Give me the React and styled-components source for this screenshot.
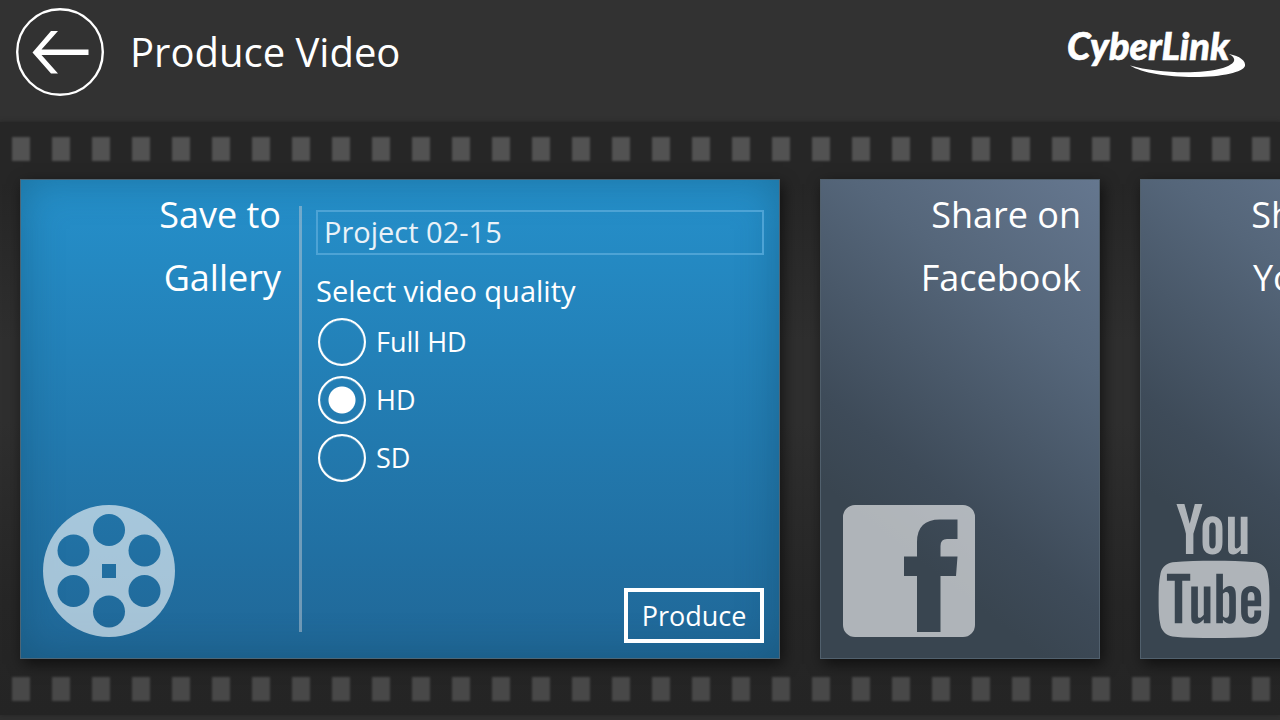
import React, { useState } from "react";
import styled, { createGlobalStyle } from "styled-components";
import { TfiYoutube } from "react-icons/tfi";

const GlobalStyle = createGlobalStyle`
  * {
    box-sizing: border-box;
  }

  body {
    margin: 0;
    background: #303030;
    color: #fff;
    font-family: "Open Sans", "Noto Sans", sans-serif;
  }
`;

const PageEl = styled.div`
  display: flex;
  flex-direction: column;
  min-height: 100vh;
  overflow: hidden;
`;

const HeaderEl = styled.header`
  display: flex;
  align-items: center;
  gap: 26px;
  padding: 8px 34px 26px 16px;
  background: #323232;
`;

const BackButtonEl = styled.button`
  width: 88px;
  height: 88px;
  padding: 0;
  border: 0;
  background: none;
  color: inherit;
  cursor: pointer;

  svg {
    display: block;
  }
`;

const TitleEl = styled.h1`
  flex: 1;
  margin: 0;
  font-size: 40px;
  font-weight: 400;
  line-height: 56px;
`;

const LogoEl = styled.svg`
  flex: none;
  overflow: visible;
`;

const FilmEl = styled.main`
  display: flex;
  flex-direction: column;
  background: linear-gradient(
    #262626,
    #262626 60px,
    #2f2f2f 220px,
    #2f2f2f 300px,
    #262626 480px,
    #242424
  );
  box-shadow: 0 0 4px #242424;
`;

const HolesEl = styled.div`
  height: 24px;
  margin: ${({ $margin }) => $margin};
  background: repeating-linear-gradient(
    90deg,
    transparent 0 12px,
    ${({ $color }) => $color} 12px 30px,
    transparent 30px 40px
  );
  filter: blur(1px);
`;

const CardsEl = styled.div`
  display: flex;
  gap: 40px;
  padding: 0 20px;
`;

const CardEl = styled.section`
  display: flex;
  flex: none;
  width: ${({ $active }) => ($active ? "760px" : "280px")};
  height: 480px;
  border: 1px solid ${({ $active }) => ($active ? "#4d6575" : "#51606d")};
  background: ${({ $active }) =>
    $active
      ? "linear-gradient(#2590cb, #2279ae 55%, #206797)"
      : "linear-gradient(218deg, #65778f, #55667a 28%, #3e4b59 62%, #394550 75%)"};
  box-shadow:
    ${({ $active }) => ($active ? "inset 0 0 40px rgba(15, 70, 95, 0.4)," : "")}
    3px 5px 14px rgba(0, 0, 0, 0.6);
`;

const TileEl = styled.div`
  display: flex;
  flex: 0 0 278px;
  flex-direction: column;
  justify-content: space-between;
  padding: 3px 18px 20px 21px;
`;

const TileTitleEl = styled.h2`
  margin: 0;
  font-size: 36px;
  font-weight: 400;
  line-height: 63px;
  text-align: right;

  span {
    display: block;
  }
`;

const TileIconEl = styled.div`
  width: 134px;
  height: 134px;
  color: rgba(255, 255, 255, 0.6);

  svg {
    display: block;
    overflow: visible;
  }
`;

const DividerEl = styled.div`
  flex: 0 0 3px;
  margin: 26px 0;
  background: rgba(190, 200, 210, 0.5);
`;

const FormEl = styled.form`
  display: flex;
  flex: 1;
  flex-direction: column;
  min-width: 0;
  padding: 30px 15px 15px 14px;
`;

const NameInputEl = styled.input`
  width: 100%;
  height: 45px;
  padding: 0 6px 2px;
  border: 2px solid #4da3d5;
  outline: 0;
  background: transparent;
  color: #eaf2f8;
  font-family: inherit;
  font-size: 29px;
`;

const QualityEl = styled.fieldset`
  flex: 1;
  min-width: 0;
  margin: 14px 0 0;
  padding: 0;
  border: 0;
`;

const LegendEl = styled.legend`
  padding: 0;
  font-size: 29px;
  line-height: 44px;
`;

const OptionEl = styled.label`
  display: flex;
  align-items: center;
  gap: 10px;
  height: 58px;
  padding-left: 2px;
  font-size: 27px;
  line-height: 36px;
`;

const RadioEl = styled.input`
  width: 48px;
  height: 48px;
  margin: 0;
  border: 2px solid #fff;
  border-radius: 50%;
  box-shadow: inset 0 0 1px #fff;
  appearance: none;

  &:checked {
    background: radial-gradient(circle, #fff 13px, transparent 14px);
  }
`;

const ProduceButtonEl = styled.button`
  align-self: flex-end;
  width: 140px;
  height: 55px;
  padding: 0;
  border: 4px solid #fff;
  background: transparent;
  color: #fff;
  font-family: inherit;
  font-size: 27px;
  cursor: pointer;
`;

const BackIcon = () => (
  <svg width="88" height="88" viewBox="0 0 88 88" fill="none" aria-hidden="true">
    <circle cx="44" cy="44" r="42.800" stroke="currentColor" strokeWidth="2.400" />
    <path
      d="M35 23h7L25.500 41.500h47v5.500h-47L42 65.500h-7L16.500 44.500z"
      fill="currentColor"
    />
  </svg>
);

const CyberLinkLogo = () => (
  <LogoEl width="180" height="54" viewBox="0 0 180 54" role="img" aria-label="CyberLink">
    <text
      x="1"
      y="35"
      fill="#fff"
      stroke="#fff"
      strokeWidth="0.600"
      fontFamily="Lato, sans-serif"
      fontSize="38"
      fontStyle="italic"
      fontWeight="900"
    >
      CyberLink
    </text>
    <path
      d="M64 40.500C91 48 132 50 157 43C169 39 172 34 163 29C174 31 180 36 179 41C177 47 157 52 128 52C101 52 76 48 64 40.500z"
      fill="#fff"
    />
  </LogoEl>
);

const ReelIcon = () => (
  <svg width="134" height="134" viewBox="0 0 134 134" aria-hidden="true">
    <mask id="reel">
      <circle cx="67" cy="67" r="66" fill="#fff" />
      <circle cx="67" cy="26" r="16" />
      <circle cx="102.500" cy="46.500" r="16" />
      <circle cx="102.500" cy="87" r="16" />
      <circle cx="67" cy="107.500" r="16" />
      <circle cx="31.500" cy="87" r="16" />
      <circle cx="31.500" cy="46.500" r="16" />
      <rect x="60" y="60" width="14" height="14" />
    </mask>
    <rect width="134" height="134" fill="currentColor" mask="url(#reel)" />
  </svg>
);

const FacebookIcon = () => (
  <svg width="134" height="134" viewBox="0 0 134 134" aria-hidden="true">
    <path
      fill="currentColor"
      fillRule="evenodd"
      d="M13 1H121A12 12 0 0 1 133 13V121A12 12 0 0 1 121 133H13A12 12 0 0 1 1 121V13A12 12 0 0 1 13 1zM75 128H98.500V72H114L115.500 52.500H98.500V42Q98.500 35 105 35H115.500V15.500H98Q75 15.500 75 38V52.500H62V72H75z"
    />
  </svg>
);

// the glyph sits in the middle of its 17 unit box, so the box starts further right
const YouTubeIcon = () => <TfiYoutube size={134} viewBox="1.9 0 17 17" />;

const qualities = ["Full HD", "HD", "SD"];

const shareTargets = [
  { name: "Facebook", icon: <FacebookIcon /> },
  { name: "YouTube", icon: <YouTubeIcon /> },
];

const Tile = ({ lines, icon }) => (
  <TileEl>
    <TileTitleEl>
      {lines.map((line) => (
        <span key={line}>{line}</span>
      ))}
    </TileTitleEl>
    <TileIconEl>{icon}</TileIconEl>
  </TileEl>
);

const App = () => {
  const [name, setName] = useState("Project 02-15");
  const [quality, setQuality] = useState("HD");

  return (
    <>
      <GlobalStyle />
      <PageEl>
        <HeaderEl>
          <BackButtonEl type="button" aria-label="Back">
            <BackIcon />
          </BackButtonEl>
          <TitleEl>Produce Video</TitleEl>
          <CyberLinkLogo />
        </HeaderEl>

        <FilmEl>
          <HolesEl $color="#525252" $margin="15px 0 18px" />

          <CardsEl>
            <CardEl $active>
              <Tile lines={["Save to", "Gallery"]} icon={<ReelIcon />} />
              <DividerEl />
              <FormEl onSubmit={(e) => e.preventDefault()}>
                <NameInputEl
                  aria-label="Project name"
                  value={name}
                  onChange={(e) => setName(e.target.value)}
                />
                <QualityEl>
                  <LegendEl>Select video quality</LegendEl>
                  {qualities.map((item) => (
                    <OptionEl key={item}>
                      <RadioEl
                        type="radio"
                        name="quality"
                        checked={quality === item}
                        onChange={() => setQuality(item)}
                      />
                      {item}
                    </OptionEl>
                  ))}
                </QualityEl>
                <ProduceButtonEl type="submit">Produce</ProduceButtonEl>
              </FormEl>
            </CardEl>

            {shareTargets.map((target) => (
              <CardEl key={target.name}>
                <Tile lines={["Share on", target.name]} icon={target.icon} />
              </CardEl>
            ))}
          </CardsEl>

          <HolesEl $color="#484848" $margin="18px 0 14px" />
        </FilmEl>
      </PageEl>
    </>
  );
};

export default App;
